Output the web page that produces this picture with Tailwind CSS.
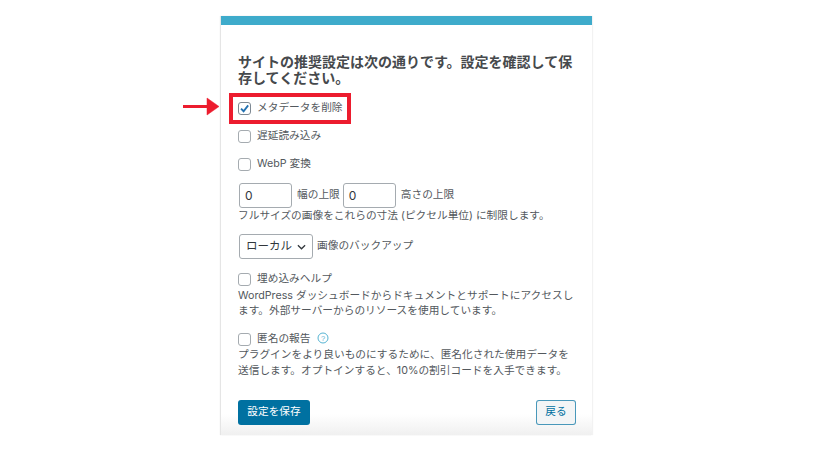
<!DOCTYPE html>
<html lang="ja">
<head>
  <meta charset="UTF-8">
  <title>推奨設定</title>
  <script src="https://cdn.jsdelivr.net/npm/@tailwindcss/browser@4"></script>
</head>
<body class="bg-white h-[457px] w-[817px] overflow-hidden relative font-['Inter','Noto_Sans_CJK_JP',sans-serif] text-[#53585d]">

  <!-- card -->
  <div class="absolute left-[221px] top-[16px] w-[371px] h-[419px] bg-gradient-to-b from-white from-[95%] to-[#f0f0f0] shadow-[-1px_0_1px_rgba(0,0,0,0.10),1px_0_1px_rgba(0,0,0,0.05)]">
    <div class="h-[9px] bg-[#3eabcb]"></div>

    <div class="pl-[17px] pr-[16px] pt-[29px]">
      <h1 class="text-[14px] leading-[16px] font-bold text-[#46494c]">サイトの推奨設定は次の通りです。設定を確認して保存してください。</h1>

      <div class="mt-[14px] flex flex-col">
        <label class="flex items-center gap-[6px] h-[16px] text-[10.7px]">
          <span class="w-[13px] h-[13px] rounded-[3px] border border-[#7e8993] bg-white flex items-center justify-center">
            <svg viewBox="0 0 12 12" class="w-[11px] h-[11px]"><path d="M2.2 6.2 L5 9 L10 2.6" fill="none" stroke="#2271b1" stroke-width="2"/></svg>
          </span>
          メタデータを削除
        </label>
        <label class="mt-[12px] flex items-center gap-[6px] h-[16px] text-[10.7px]">
          <span class="w-[13px] h-[13px] rounded-[3px] border border-[#a5abb0] bg-white"></span>
          遅延読み込み
        </label>
        <label class="mt-[12px] flex items-center gap-[6px] h-[16px] text-[10.7px]">
          <span class="w-[13px] h-[13px] rounded-[3px] border border-[#a5abb0] bg-white"></span>
          WebP 変換
        </label>
      </div>

      <div class="mt-[11px] ml-[1px] flex items-center text-[10.7px]">
        <span class="w-[53px] h-[25px] rounded-[3px] border border-[#a5abb0] pl-[5px] flex items-center text-[12px] text-[#32373c]">0</span>
        <span class="ml-[5px]">幅の上限</span>
        <span class="ml-[3px] w-[53px] h-[25px] rounded-[3px] border border-[#a5abb0] pl-[5px] flex items-center text-[12px] text-[#32373c]">0</span>
        <span class="ml-[5px]">高さの上限</span>
      </div>
      <p class="text-[10.7px] leading-[15px]">フルサイズの画像をこれらの寸法 (ピクセル単位) に制限します。</p>

      <div class="mt-[11px] ml-[1px] flex items-center text-[10.7px]">
        <span class="w-[74px] h-[25px] rounded-[3px] border border-[#a5abb0] flex items-center pl-[6px] gap-[5px] text-[11.5px] text-[#32373c]">
          ローカル
          <svg viewBox="0 0 10 6" class="w-[9px] h-[6px]"><path d="M1 1 L5 5 L9 1" fill="none" stroke="#32373c" stroke-width="1.4"/></svg>
        </span>
        <span class="ml-[4px]">画像のバックアップ</span>
      </div>

      <div class="mt-[12px]">
        <label class="flex items-center gap-[6px] h-[16px] text-[10.7px]">
          <span class="w-[13px] h-[13px] rounded-[3px] border border-[#a5abb0] bg-white"></span>
          埋め込みヘルプ
        </label>
        <p class="text-[10.7px] leading-[15px] mt-[1px]">WordPress ダッシュボードからドキュメントとサポートにアクセスします。外部サーバーからのリソースを使用しています。</p>
      </div>

      <div class="mt-[13px]">
        <label class="flex items-center gap-[6px] h-[16px] text-[10.7px]">
          <span class="w-[13px] h-[13px] rounded-[3px] border border-[#a5abb0] bg-white"></span>
          匿名の報告
          <svg viewBox="0 0 12 12" class="w-[12px] h-[12px] ml-[1px] -mt-[3px]"><circle cx="6" cy="6" r="5" fill="none" stroke="#56b4d3" stroke-width="1"/><text x="6" y="8.7" text-anchor="middle" font-size="7.5" font-family="Liberation Sans" fill="#56b4d3">?</text></svg>
        </label>
        <p class="text-[10.7px] leading-[16px]">プラグインをより良いものにするために、匿名化された使用データを送信します。オプトインすると、10%の割引コードを入手できます。</p>
      </div>

      <div class="mt-[21px] flex justify-between">
        <button class="w-[72px] h-[25px] rounded-[3px] bg-[#0071a1] text-white text-[10.7px]">設定を保存</button>
        <button class="w-[40px] h-[25px] rounded-[3px] border border-[#0071a1]/70 bg-[#f3f5f6] text-[#0071a1] text-[10.7px]">戻る</button>
      </div>
    </div>
  </div>

  <!-- annotation: red box and arrow -->
  <div class="absolute left-[229px] top-[93px] w-[122px] h-[31px] border-[4px] border-[#ec1c2e]"></div>
  <svg class="absolute left-[182px] top-[97px]" width="38" height="20" viewBox="0 0 38 20">
    <path d="M1 9.5 H26" stroke="#ec1c2e" stroke-width="3"/>
    <path d="M25 1 L37 9.5 L25 18 Z" fill="#ec1c2e" stroke="#ec1c2e" stroke-width="0.5" stroke-linejoin="round"/>
  </svg>
</body>
</html>
